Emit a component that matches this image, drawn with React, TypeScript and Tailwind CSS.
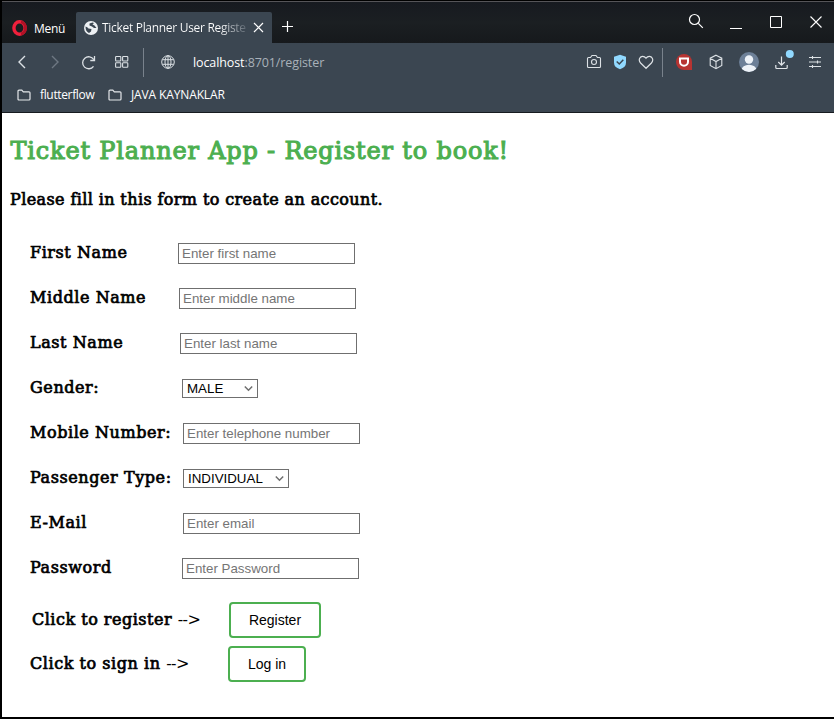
import type { ReactNode } from "react";

const serif = "font-['DejaVu_Serif',serif] font-normal whitespace-pre";
const label16 = "text-[16px] leading-5 [-webkit-text-stroke:0.7px_currentColor]";
const arial = "font-['Liberation_Sans',Arial,sans-serif]";

function Icon({ size, children, className = "", w = 1.2 }: { size: number; children: ReactNode; className?: string; w?: number }) {
  return (
    <svg width={size} height={size} viewBox={`0 0 ${size} ${size}`} fill="none" stroke="currentColor" strokeWidth={w} className={`block shrink-0 ${className}`}>
      {children}
    </svg>
  );
}

function Folder() {
  return (
    <Icon size={14} className="text-[#e4e7ea]">
      <path d="M1 3.200q0-1 1-1h2.800l1.500 1.600H12q1 0 1 1v6.200q0 1-1 1H2q-1 0-1-1z" />
    </Icon>
  );
}

function TabStrip() {
  return (
    <div className="flex h-[41px] shrink-0 items-start bg-[#191c20] bg-linear-to-b from-[#171a20] via-[#1b1f22] to-[#16191c] text-white">
      <div className="ml-[10px] mt-[18px] flex items-center">
        <svg width="15" height="16" viewBox="0 0 15 16" className="block">
          <ellipse cx="7.500" cy="8" rx="5.600" ry="6.200" fill="none" stroke="#f0203c" strokeWidth="3.400" />
          <path d="M9 1.900a5.500 6.200 0 0 1 0 12.200" fill="none" stroke="#b01226" strokeWidth="3" />
        </svg>
        <span className="relative top-px ml-[7px] w-[42px] text-[12px] leading-4 tracking-[-0.3px]">Menü</span>
      </div>
      <div className="mt-[10px] flex h-[31px] w-[196px] items-center rounded-t-[2px] bg-[#3b4651] pl-[8px]">
        <svg width="14" height="14" viewBox="0 0 14 14" className="block shrink-0">
          <circle cx="7" cy="7" r="7" fill="#edf0f3" />
          <path d="M1.500 5.500q2 .5 3 2l3 .5-.5 2.500-2 1.500Q1.500 10.500 1.500 5.500M5.500 2.500l3-1 1.500.5-1.500 1.500 2 1 2 2.500-2.500 0-2-1.500-2.500-1z" fill="#3b4651" />
        </svg>
        <span className="ml-[4px] w-[144px] whitespace-nowrap bg-linear-to-r from-white from-82% to-[#5c6670] bg-clip-text text-[12px] tracking-[-0.3px] text-transparent">Ticket Planner User Registe</span>
        <Icon size={11} className="ml-[7px] text-white"><path d="M1 1l9 9M10 1l-9 9" /></Icon>
      </div>
      <Icon size={13} className="ml-[9px] mt-[18px]"><path d="M6.500 1v11M1 6.500h11" /></Icon>
      <div className="ml-auto mt-[11px] flex items-start">
        <Icon size={16} className="mr-[26px]"><circle cx="6.500" cy="6.500" r="5" /><path d="M10.300 10.300l4.500 4.500" /></Icon>
        <Icon size={12} className="mr-[28px] mt-[4px]"><path d="M0 11.500h12" strokeWidth="1" /></Icon>
        <Icon size={12} className="mr-[28px] mt-[3px]" w={1}><path d="M.5.5h11v11H.5z" /></Icon>
        <Icon size={12} className="mr-[12px] mt-[3px]" w={1.100}><path d="M.5.5l11 11M11.500.5l-11 11" /></Icon>
      </div>
    </div>
  );
}

function AddressBar() {
  return (
    <div className="flex h-[38px] shrink-0 items-center text-[#dce1e5]">
      <Icon size={14} className="ml-[13px]" w={1.400}><path d="M10 1L4 7l6 6" /></Icon>
      <Icon size={14} className="ml-[19px] text-[#6e7883]" w={1.400}><path d="M4 1l6 6-6 6" /></Icon>
      <Icon size={15} className="ml-[19px]" w={1.300}><path d="M12.500 11.300A6 6 0 1 1 12.700 4.500M13.500 1v4.500H9.300" /></Icon>
      <Icon size={14} className="ml-[19px]" w={1.100}>
        <rect x=".6" y="1.500" width="5.200" height="4.500" rx=".7" /><rect x="7.600" y="1.500" width="5.200" height="4.500" rx=".7" />
        <rect x=".6" y="7.800" width="5.200" height="4.500" rx=".7" /><rect x="7.600" y="7.800" width="5.200" height="4.500" rx=".7" />
      </Icon>
      <div className="ml-[14px] h-[29px] w-px bg-[#79828c]" />
      <Icon size={14} className="ml-[17px]" w={1}>
        <circle cx="7" cy="7" r="6.300" /><ellipse cx="7" cy="7" rx="3" ry="6.300" /><path d="M7 .7v12.600M1.300 4.700h11.400M1.300 9.300h11.400" />
      </Icon>
      <span className="relative top-px ml-[18px] text-[12.5px] tracking-[-0.1px] text-[#a9b1b9]"><span className="text-white">localhost</span>:8701/register</span>
      <div className="ml-auto flex items-center">
        <Icon size={16} w={1.100}><path d="M1.500 4.500q0-1 1-1h2L6 1.500h4l1.500 2h2q1 0 1 1v8q0 1-1 1h-11q-1 0-1-1z" /><circle cx="8" cy="8" r="2.500" /></Icon>
        <svg width="14" height="16" viewBox="0 0 14 16" className="ml-[11px] block">
          <path d="M7 .8l6 2v6q0 4.500-6 6.500Q1 13.300 1 8.800v-6z" fill="#91d9ff" /><path d="M3.700 7.500L6.300 10l4-4.200" fill="none" stroke="#3b4651" strokeWidth="1.500" />
        </svg>
        <Icon size={16} className="ml-[11px]"><path d="M8 14.300L2.600 9Q.5 6.500 1.700 4.200C3 1.800 6 1.500 8 4.200c2-2.700 5-2.400 6.300 0Q15.500 6.500 13.400 9z" /></Icon>
        <div className="ml-[8px] h-[29px] w-px bg-[#79828c]" />
        <svg width="16" height="16" viewBox="0 0 16 16" className="ml-[13px] block">
          <path d="M8 0a8 8 0 1 0 0 16h8V8a8 8 0 0 0-8-8" fill="#b73432" />
          <path d="M4 4.600h8v3.200a4 4 0 0 1-8 0z" fill="#b73432" stroke="#fff" strokeWidth="2" />
        </svg>
        <Icon size={16} className="ml-[16px]" w={1.100}><path d="M8 1.200l5.800 3v7.300L8 14.700l-5.800-3.200V4.200zM2.200 4.300L8 7.500l5.800-3.200M8 7.500v7" /></Icon>
        <svg width="20" height="20" viewBox="0 0 20 20" className="ml-[15px] block">
          <clipPath id="avatar"><circle cx="10" cy="10" r="10" /></clipPath>
          <g clipPath="url(#avatar)"><path d="M0 0h20v20H0z" fill="#6d8098" /><circle cx="10" cy="7.500" r="4.200" fill="#edf2f8" /><ellipse cx="10" cy="18" rx="7.500" ry="5.300" fill="#edf2f8" /></g>
        </svg>
        <svg width="20" height="24" viewBox="0 0 20 24" className="ml-[16px] block" fill="none" stroke="#e1e5e9" strokeWidth="1.200">
          <path d="M6.500 6.500v8.500M3.300 12l3.200 3.200L9.700 12M.8 15v2.500q0 1 1 1h9.400q1 0 1-1V15" /><circle cx="14.800" cy="4" r="4" fill="#91d9ff" stroke="none" />
        </svg>
        <Icon size={12} className="ml-[14px] mr-[13px]" w={1.100}><path d="M0 1.500h12M0 6h12M0 10.500h12M3.500 0v3M8.500 4.500v3M3.500 9v3" /></Icon>
      </div>
    </div>
  );
}

function Row({ label, className, children }: { label: string; className: string; children: ReactNode }) {
  return (
    <div className="flex h-[45px] items-center">
      <label className={`${serif} ${label16} ${className} shrink-0 pl-[20px] tracking-[0.57px]`}>{label}</label>
      {children}
    </div>
  );
}

function Field({ hint }: { hint: string }) {
  return <input placeholder={hint} className={`${arial} mt-[2px] h-[21px] w-[177px] border border-[#6f6f6f] bg-white px-[3px] text-[13.333px] outline-none placeholder:text-[#757575]`} />;
}

function Choice({ value, className }: { value: string; className: string }) {
  return (
    <button className={`${arial} ${className} mt-[2px] flex h-[19px] items-center justify-between border border-[#6f6f6f] bg-white pl-[4px] pr-[4px] text-[13.333px]`}>
      <span className="leading-[17px]">{value}</span>
      <Icon size={9} w={1.500} className="text-[#6f6f6f]"><path d="M.8 2.500l3.700 3.700 3.700-3.700" /></Icon>
    </button>
  );
}

const action = `${arial} h-[36px] rounded-[4px] border-2 border-[#4caf50] bg-white text-[14px]`;
const arrow = "tracking-[-0.5px] [-webkit-text-stroke:0]";

export default function App() {
  return (
    <div className="flex h-[719px] w-[834px] flex-col overflow-hidden border-b-2 border-l-2 border-black bg-white font-['Open_Sans','Noto_Sans',sans-serif]">
      <div className="h-[2px] shrink-0 border-b border-[#555458] bg-black" />
      <TabStrip />
      <div className="flex h-[70px] shrink-0 flex-col border-b border-[#171b20] bg-[#3b4651]">
        <AddressBar />
        <div className="mt-[5px] flex h-[18px] items-center text-[12px] text-white">
          <span className="ml-[15px]"><Folder /></span><span className="ml-[9px] w-[55px] tracking-[-0.35px]">flutterflow</span>
          <span className="ml-[13px]"><Folder /></span><span className="ml-[9px] tracking-[-0.13px]">JAVA KAYNAKLAR</span>
        </div>
      </div>
      <main className="pl-[8px] text-black">
        <h1 className={`${serif} mt-[22px] pl-[0.5px] text-[24px] leading-8 tracking-[0.81px] text-[#4caf50] [-webkit-text-stroke:1.1px_currentColor]`}>Ticket Planner App - Register to book!</h1>
        <p className={`${serif} ${label16} mt-[23px] tracking-[0.39px]`}>Please fill in this form to create an account.</p>
        <form className="mt-[20px]">
          <Row label="First Name" className="w-[168px]"><Field hint="Enter first name" /></Row>
          <Row label="Middle Name" className="w-[169px]"><Field hint="Enter middle name" /></Row>
          <Row label="Last Name" className="w-[170px]"><Field hint="Enter last name" /></Row>
          <Row label="Gender:" className="w-[172px]"><Choice value="MALE" className="w-[76px]" /></Row>
          <Row label="Mobile Number:" className="w-[173px]"><Field hint="Enter telephone number" /></Row>
          <Row label="Passenger Type:" className="w-[173px]"><Choice value="INDIVIDUAL" className="w-[106px]" /></Row>
          <Row label="E-Mail" className="w-[173px]"><Field hint="Enter email" /></Row>
          <Row label="Password" className="w-[172px]"><Field hint="Enter Password" /></Row>
          <div className="mt-[12px] flex h-[36px] items-center">
            <span className={`${serif} ${label16} w-[219px] pl-[22px] tracking-[0.5px]`}>Click to register <span className={arrow}>--&gt;</span></span>
            <button className={`${action} w-[92px]`}>Register</button>
          </div>
          <div className="mt-[8px] flex h-[36px] items-center">
            <span className={`${serif} ${label16} w-[218px] pl-[20px] tracking-[0.55px]`}>Click to sign in <span className={arrow}>--&gt;</span></span>
            <button className={`${action} w-[78px]`}>Log in</button>
          </div>
        </form>
      </main>
    </div>
  );
}
